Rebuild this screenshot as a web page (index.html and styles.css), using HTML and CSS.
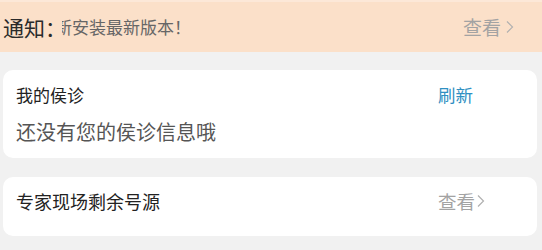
FILE: index.html
```html
<!DOCTYPE html>
<html lang="zh">
<head>
<meta charset="utf-8">
<link rel="stylesheet" href="styles.css">
</head>
<body>
<div class="notice">
  <span class="notice-label">通知：</span>
  <div class="marquee"><span class="marquee-text">新安装最新版本！</span></div>
  <a class="more more-notice">查看<svg class="chev" viewBox="0 0 9 14" width="9" height="14"><path d="M2 1.5 L7.5 7 L2 12.5" fill="none" stroke="currentColor" stroke-width="1.2"/></svg></a>
</div>
<div class="card card-wait">
  <div class="row">
    <span class="title">我的侯诊</span>
    <a class="refresh">刷新</a>
  </div>
  <div class="empty">还没有您的侯诊信息哦</div>
</div>
<div class="card card-expert">
  <div class="row">
    <span class="title title-expert">专家现场剩余号源</span>
    <a class="more">查看<svg class="chev" viewBox="0 0 9 14" width="9" height="14"><path d="M2 1.5 L7.5 7 L2 12.5" fill="none" stroke="currentColor" stroke-width="1.2"/></svg></a>
  </div>
</div>
</body>
</html>
```
FILE: styles.css
```css
html, body {
  margin: 0;
  padding: 0;
  background: #f1f1f1;
  font-family: "Noto Sans CJK SC", "Noto Sans", sans-serif;
  width: 542px;
  height: 250px;
  overflow: hidden;
}
.notice {
  height: 50px;
  border-top: 2px solid #fce8d8;
  background: #fbe0c9;
  display: flex;
  align-items: center;
  padding: 0 28px 0 3px;
}
.notice-label {
  font-size: 21px;
  color: #2a2a2a;
  width: 59px;
  flex: none;
  white-space: nowrap;
  overflow: hidden;
  line-height: 28px;
}
.marquee {
  flex: 1;
  overflow: hidden;
  white-space: nowrap;
}
.marquee-text {
  display: inline-block;
  margin-left: -7px;
  font-size: 17px;
  color: #666;
  line-height: 24px;
}
.more {
  display: flex;
  align-items: center;
  font-size: 18.5px;
  color: #a3a3a3;
  line-height: 24px;
}
.more-notice {
  font-size: 19px;
}
.chev {
  margin-left: 1px;
  color: #b0b0b0;
}
.more-notice .chev {
  margin-left: 4px;
}
.card {
  background: #fff;
  border-radius: 10px;
  margin: 18px 5px 0 3px;
  box-sizing: border-box;
}
.card-wait {
  height: 88px;
  padding: 13px 64px 0 13px;
}
.card-expert {
  margin-top: 19px;
  height: 59px;
  padding: 12px 52px 0 13px;
}
.row {
  display: flex;
  justify-content: space-between;
  align-items: center;
  height: 24px;
}
.title {
  font-size: 17px;
  color: #222;
  line-height: 24px;
}
.title-expert {
  font-size: 18px;
}
.refresh {
  font-size: 17.5px;
  color: #2f90c2;
  line-height: 24px;
}
.empty {
  margin-top: 11px;
  font-size: 20px;
  line-height: 28px;
  color: #555;
}
```
